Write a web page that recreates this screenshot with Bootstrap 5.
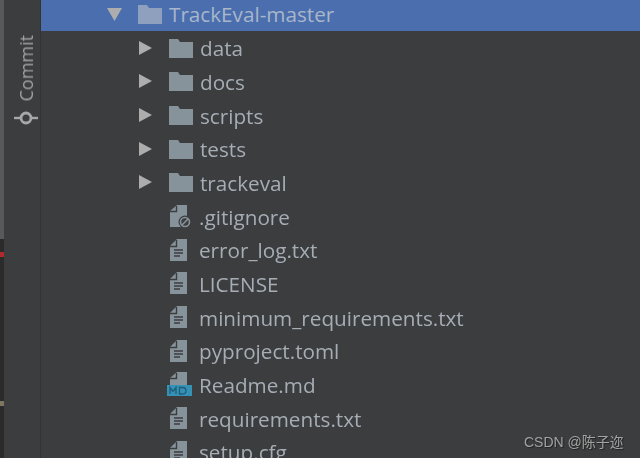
<!DOCTYPE html>
<html lang="en">
<head>
  <meta charset="UTF-8">
  <meta name="viewport" content="width=device-width, initial-scale=1">
  <title>Project tree</title>
  <link href="https://cdn.jsdelivr.net/npm/bootstrap@5.3.3/dist/css/bootstrap.min.css" rel="stylesheet">
  <style>
    html, body { height: 100%; overflow: hidden; background: #3c3d3f; }
    .ide-shell { height: 458px; filter: blur(.5px); }
    .edge-strip { width: 4px; background: #2b2b2b; position: relative; }
    .edge-thumb { position: absolute; top: 0; left: 0; width: 4px; height: 239px; background: #57595b; }
    .edge-err { position: absolute; top: 252px; left: 0; width: 4px; height: 5px; background: #b02a2a; }
    .edge-warn { position: absolute; top: 401px; left: 0; width: 4px; height: 5px; background: #7d7660; }
    .tool-rail { width: 37px; background: #3c3d3f; border-right: 1px solid #323335; padding-top: 35px; padding-left: 7px; color: #a0a2a4; }
    .rail-label { writing-mode: vertical-rl; transform: rotate(180deg); font: 18px "Open Sans", sans-serif; line-height: 1; }
    .rail-icon { width: 24px; height: 16px; margin-top: 9px; }
    .file-tree { margin-top: -3px; font-family: "Open Sans", sans-serif; font-size: 20.7px; color: #a6adb5; }
    .tree-row { height: 33.7px; line-height: 1; white-space: nowrap; }
    .row-root { background: #4b6eaf; padding-left: 66px; color: #a8b6c9; }
    .row-dir { padding-left: 97px; }
    .row-file { padding-left: 126px; }
    .arrow-box { width: 15px; height: 16px; margin-right: 15px; flex: none; }
    .item-icon { width: 26px; height: 24px; margin-right: 6px; flex: none; }
    .item-name { padding-top: 2px; }
    .watermark { position: absolute; left: 524px; top: 431px; font: 14px "Liberation Sans", "Noto Sans CJK SC", sans-serif; color: #a3a3a3; text-shadow: 1px 1px 1px #222; }
  </style>
</head>
<body>
  <svg width="0" height="0" class="position-absolute">
    <symbol id="ic-right" viewBox="0 0 15 16"><path d="M1 1 L14 8 L1 15 Z" fill="#adadad"/></symbol>
    <symbol id="ic-down" viewBox="0 0 15 16"><path d="M0 2 H15 L7.5 15 Z" fill="#adadad"/></symbol>
    <symbol id="ic-folder" viewBox="0 0 26 24"><path d="M1 3 H10 L12 6 H25 V22 H1 Z" fill="#87939a"/></symbol>
    <symbol id="ic-folder-sel" viewBox="0 0 26 24"><path d="M1 3 H10 L12 6 H25 V22 H1 Z" fill="#8ea0bd"/></symbol>
    <symbol id="ic-text" viewBox="0 0 26 24"><path d="M10 1 H20 V23 H3 V8 Z" fill="#87939a"/><path d="M9.5 2 V8.5 H3" fill="none" stroke="#3c3d3f" stroke-width="1.4"/><path d="M7 12 H16 M7 15 H16 M7 18 H13" stroke="#3c3d3f" stroke-width="1.5"/></symbol>
    <symbol id="ic-ignored" viewBox="0 0 26 24"><path d="M10 1 H20 V23 H3 V7 Z" fill="#87939a"/><path d="M9.5 2 V7.5 H3" fill="none" stroke="#3c3d3f" stroke-width="1.4"/><circle cx="18" cy="18" r="6.5" fill="#3c3d3f"/><circle cx="18" cy="18" r="4.5" fill="none" stroke="#87939a" stroke-width="1.6"/><path d="M15 21 L21 15" stroke="#87939a" stroke-width="1.6"/></symbol>
    <symbol id="ic-md" viewBox="0 0 26 24"><path d="M10 0 H20 V13 H3 V6 Z" fill="#87939a"/><path d="M9.5 1 V6.5 H3" fill="none" stroke="#3c3d3f" stroke-width="1.4"/><rect x="0" y="13" width="25" height="11" fill="#3592b5"/><path d="M3 22 V15.5 L6 19.5 L9 15.5 V22 M12.5 15.5 V22 H15.5 Q19 22 19 18.8 Q19 15.5 15.5 15.5 Z" fill="none" stroke="#1f5c78" stroke-width="1.3"/></symbol>
  </svg>

  <div class="ide-shell d-flex position-relative">
    <div class="edge-strip flex-shrink-0">
      <div class="edge-thumb"></div>
      <div class="edge-err"></div>
      <div class="edge-warn"></div>
    </div>
    <div class="tool-rail flex-shrink-0 d-flex flex-column align-items-center">
      <span class="rail-label">Commit</span>
      <svg class="rail-icon" viewBox="0 0 24 16"><path d="M0 8 H24" stroke="#a5a8aa" stroke-width="2.4"/><circle cx="12" cy="8" r="5" fill="#3c3d3f" stroke="#a5a8aa" stroke-width="2.8"/></svg>
    </div>
    <div class="file-tree flex-grow-1">
      <div class="tree-row row-root d-flex align-items-center"><svg class="arrow-box"><use href="#ic-down"/></svg><svg class="item-icon"><use href="#ic-folder-sel"/></svg><span class="item-name">TrackEval-master</span></div>
      <div class="tree-row row-dir d-flex align-items-center"><svg class="arrow-box"><use href="#ic-right"/></svg><svg class="item-icon"><use href="#ic-folder"/></svg><span class="item-name">data</span></div>
      <div class="tree-row row-dir d-flex align-items-center"><svg class="arrow-box"><use href="#ic-right"/></svg><svg class="item-icon"><use href="#ic-folder"/></svg><span class="item-name">docs</span></div>
      <div class="tree-row row-dir d-flex align-items-center"><svg class="arrow-box"><use href="#ic-right"/></svg><svg class="item-icon"><use href="#ic-folder"/></svg><span class="item-name">scripts</span></div>
      <div class="tree-row row-dir d-flex align-items-center"><svg class="arrow-box"><use href="#ic-right"/></svg><svg class="item-icon"><use href="#ic-folder"/></svg><span class="item-name">tests</span></div>
      <div class="tree-row row-dir d-flex align-items-center"><svg class="arrow-box"><use href="#ic-right"/></svg><svg class="item-icon"><use href="#ic-folder"/></svg><span class="item-name">trackeval</span></div>
      <div class="tree-row row-file d-flex align-items-center"><svg class="item-icon"><use href="#ic-ignored"/></svg><span class="item-name">.gitignore</span></div>
      <div class="tree-row row-file d-flex align-items-center"><svg class="item-icon"><use href="#ic-text"/></svg><span class="item-name">error_log.txt</span></div>
      <div class="tree-row row-file d-flex align-items-center"><svg class="item-icon"><use href="#ic-text"/></svg><span class="item-name">LICENSE</span></div>
      <div class="tree-row row-file d-flex align-items-center"><svg class="item-icon"><use href="#ic-text"/></svg><span class="item-name">minimum_requirements.txt</span></div>
      <div class="tree-row row-file d-flex align-items-center"><svg class="item-icon"><use href="#ic-text"/></svg><span class="item-name">pyproject.toml</span></div>
      <div class="tree-row row-file d-flex align-items-center"><svg class="item-icon"><use href="#ic-md"/></svg><span class="item-name">Readme.md</span></div>
      <div class="tree-row row-file d-flex align-items-center"><svg class="item-icon"><use href="#ic-text"/></svg><span class="item-name">requirements.txt</span></div>
      <div class="tree-row row-file d-flex align-items-center"><svg class="item-icon"><use href="#ic-text"/></svg><span class="item-name">setup.cfg</span></div>
    </div>
    <div class="watermark">CSDN @陈子迩</div>
  </div>

  <script src="https://cdn.jsdelivr.net/npm/bootstrap@5.3.3/dist/js/bootstrap.bundle.min.js"></script>
</body>
</html>
